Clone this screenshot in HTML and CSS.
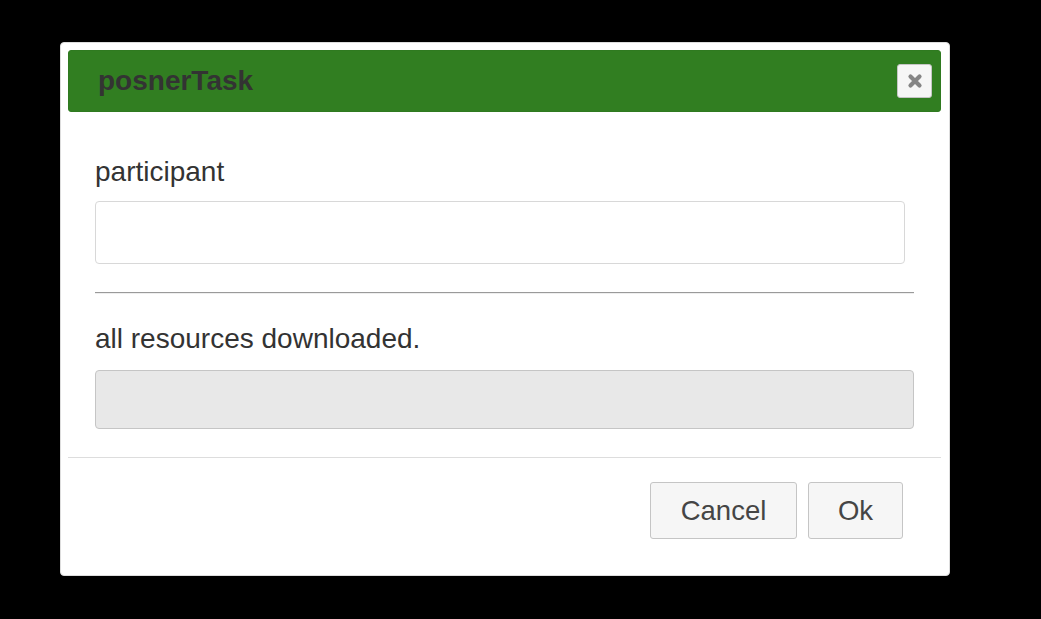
FILE: index.html
```html
<!DOCTYPE html>
<html>
<head>
<meta charset="utf-8">
<link rel="stylesheet" href="styles.css">
</head>
<body>
<div class="dialog">
  <div class="titlebar">
    <span class="title">posnerTask</span>
    <button class="close" aria-label="close">
      <svg width="16" height="16" viewBox="0 0 16 16"><path d="M3.5 3.5 L12.5 12.5 M12.5 3.5 L3.5 12.5" stroke="#858585" stroke-width="4.2" stroke-linecap="round" fill="none"/></svg>
    </button>
  </div>
  <div class="content">
    <label class="label first">participant</label>
    <input class="field" type="text">
    <hr class="sep">
    <div class="label second">all resources downloaded.</div>
    <div class="progress"></div>
  </div>
  <div class="footer">
    <button class="btn btn-cancel">Cancel</button>
    <button class="btn btn-ok">Ok</button>
  </div>
</div>
</body>
</html>
```
FILE: styles.css
```css
html, body {
  margin: 0;
  padding: 0;
  background: #000;
  font-family: "Liberation Sans", Arial, sans-serif;
}
body {
  padding: 42px 0 0 60px;
  height: 619px;
  box-sizing: border-box;
}
.dialog {
  width: 890px;
  height: 534px;
  box-sizing: border-box;
  background: #fff;
  border: 1px solid #dddddd;
  border-radius: 4px;
  padding: 7px 8px 7px 7px;
}
.titlebar {
  height: 62px;
  box-sizing: border-box;
  background: #317e21;
  border: 1px solid #2f7a20;
  border-radius: 3px;
  display: flex;
  align-items: center;
  justify-content: space-between;
  padding: 0 8px 0 29px;
}
.title {
  font-weight: bold;
  font-size: 28px;
  color: #333;
  line-height: 32px;
}
.close {
  width: 35px;
  height: 34px;
  box-sizing: border-box;
  border: 1px solid #c5c5c5;
  background: #f6f6f6;
  border-radius: 3px;
  padding: 0;
  display: flex;
  align-items: center;
  justify-content: center;
}
.content {
  padding: 44px 27px 28px;
}
.label {
  display: block;
  font-size: 28px;
  line-height: 32px;
  color: #333;
}
.label.first {
  margin-bottom: 13px;
}
.label.second {
  margin-bottom: 15px;
}
.field {
  display: block;
  width: 810px;
  height: 63px;
  box-sizing: border-box;
  border: 1px solid #d8d8d8;
  border-radius: 4px;
  margin: 0;
  background: #fff;
}
.sep {
  margin: 28px 0 29px;
  border: 0;
  height: 0;
  border-top: 1px solid #9a9a9a;
  border-bottom: 1px solid #eeeeee;
}
.progress {
  height: 59px;
  box-sizing: border-box;
  border: 1px solid #c5c5c5;
  border-radius: 4px;
  background: #e8e8e8;
}
.footer {
  border-top: 1px solid #dddddd;
  padding: 24px 38px 28px;
  display: flex;
  justify-content: flex-end;
  gap: 11px;
}
.btn {
  height: 57px;
  box-sizing: border-box;
  border: 1px solid #c5c5c5;
  border-radius: 3px;
  background: #f6f6f6;
  color: #454545;
  font-family: "Liberation Sans", Arial, sans-serif;
  font-size: 27.5px;
  padding: 0;
  margin: 0;
}
.btn-cancel {
  width: 147px;
}
.btn-ok {
  width: 95px;
}
```
